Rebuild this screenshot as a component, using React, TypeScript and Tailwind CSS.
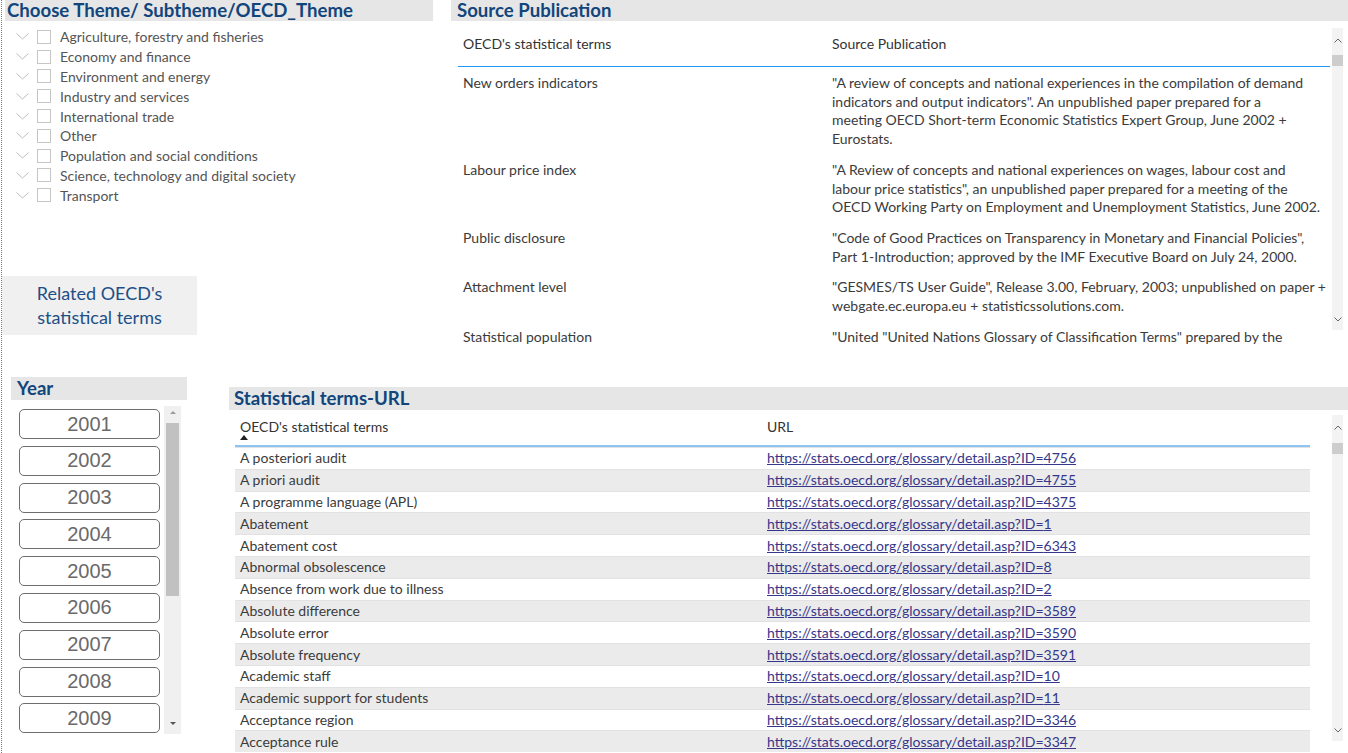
import React from 'react';

const themes = [
  'Agriculture, forestry and fisheries',
  'Economy and finance',
  'Environment and energy',
  'Industry and services',
  'International trade',
  'Other',
  'Population and social conditions',
  'Science, technology and digital society',
  'Transport',
];

const sources: { term: string; lines: string[] }[] = [
  {
    term: 'New orders indicators',
    lines: [
      '"A review of concepts and national experiences in the compilation of demand',
      'indicators and output indicators". An unpublished paper prepared for a',
      'meeting OECD Short-term Economic Statistics Expert Group, June 2002 +',
      'Eurostats.',
    ],
  },
  {
    term: 'Labour price index',
    lines: [
      '"A Review of concepts and national experiences on wages, labour cost and',
      'labour price statistics", an unpublished paper prepared for a meeting of the',
      'OECD Working Party on Employment and Unemployment Statistics, June 2002.',
    ],
  },
  {
    term: 'Public disclosure',
    lines: [
      '"Code of Good Practices on Transparency in Monetary and Financial Policies",',
      'Part 1-Introduction; approved by the IMF Executive Board on July 24, 2000.',
    ],
  },
  {
    term: 'Attachment level',
    lines: [
      '"GESMES/TS User Guide", Release 3.00, February, 2003; unpublished on paper +',
      'webgate.ec.europa.eu + statisticssolutions.com.',
    ],
  },
  {
    term: 'Statistical population',
    lines: ['"United "United Nations Glossary of Classification Terms" prepared by the'],
  },
];

const terms: [string, number][] = [
  ['A posteriori audit', 4756],
  ['A priori audit', 4755],
  ['A programme language (APL)', 4375],
  ['Abatement', 1],
  ['Abatement cost', 6343],
  ['Abnormal obsolescence', 8],
  ['Absence from work due to illness', 2],
  ['Absolute difference', 3589],
  ['Absolute error', 3590],
  ['Absolute frequency', 3591],
  ['Academic staff', 10],
  ['Academic support for students', 11],
  ['Acceptance region', 3346],
  ['Acceptance rule', 3347],
];

const years = [2001, 2002, 2003, 2004, 2005, 2006, 2007, 2008, 2009];

function Chevron({ up }: { up?: boolean }) {
  return (
    <svg width="8" height="5" viewBox="0 0 8 5" className="text-[#666]">
      <path d={up ? 'M0.5 4.5 L4 1 L7.5 4.5' : 'M0.5 0.5 L4 4 L7.5 0.5'} fill="none" stroke="currentColor" strokeWidth="1" />
    </svg>
  );
}

function ThinScroll({ thumbTop, height }: { thumbTop: number; height: number }) {
  return (
    <div className="relative w-[11px] shrink-0 bg-[#f3f3f3]" style={{ height }}>
      <div className="flex justify-center pt-[10px]"><Chevron up /></div>
      <div className="absolute left-0 right-0 h-[11px] bg-[#cdcdcd]" style={{ top: thumbTop }} />
      <div className="absolute bottom-[8px] left-0 right-0 flex justify-center"><Chevron /></div>
    </div>
  );
}

function PanelTitle({ children, className }: { children: React.ReactNode; className: string }) {
  return (
    <div className={`flex items-center bg-[#e6e6e6] font-['Lato'] text-[18.6px] font-bold text-[#11457b] ${className}`}>
      {children}
    </div>
  );
}

export default function App() {
  return (
    <div className="ml-px h-[753px] w-[1347px] overflow-hidden border-l border-dotted border-[#7a7a7a] bg-white font-['Lato',sans-serif] text-[14px] text-[#3b3b3b]">
      {/* top band */}
      <div className="flex h-[350px]">
        <div className="w-[431px] shrink-0">
          <PanelTitle className="ml-[3px] h-[21px] pl-[2px] leading-none">Choose Theme/ Subtheme/OECD_Theme</PanelTitle>
          <div className="mt-[6px]">
            {themes.map((t) => (
              <div key={t} className="flex h-[19.8px] items-center pl-[14px] text-[#555]">
                <svg width="13" height="7" viewBox="0 0 13 7" className="shrink-0">
                  <path d="M0.5 0.5 L6.5 6 L12.5 0.5" fill="none" stroke="#bdbdbd" strokeWidth="1" />
                </svg>
                <span className="ml-[8px] h-[14px] w-[14px] shrink-0 border border-[#c6c6c6] bg-white" />
                <span className="ml-[9px] whitespace-nowrap">{t}</span>
              </div>
            ))}
          </div>
          <div className="mt-[71px] flex h-[59px] w-[195px] flex-col items-center justify-center bg-[#f0f0f0] pb-[2px] text-[18px] leading-[24px] text-[#1d4f86]">
            <span>Related OECD's</span>
            <span>statistical terms</span>
          </div>
        </div>

        <div className="ml-[18px] flex flex-1 flex-col">
          <PanelTitle className="h-[21px] pl-[6px]">Source Publication</PanelTitle>
          <div className="mt-[7px] flex h-[320px] overflow-hidden">
            <div className="ml-[7px] w-[872px]">
              <div className="flex h-[39px] items-start border-b border-[#2196f3] pt-[8px] leading-[16px] text-[#333]">
                <div className="w-[369px] pl-[5px]">OECD's statistical terms</div>
                <div className="pl-[5px]">Source Publication</div>
              </div>
              <div className="mt-[1px]">
                {sources.map((s) => (
                  <div key={s.term} className="flex py-[6px] leading-[18.7px]">
                    <div className="w-[369px] shrink-0 pl-[5px]">{s.term}</div>
                    <div className="pl-[5px]">
                      {s.lines.map((l) => (
                        <div key={l} className="whitespace-nowrap">{l}</div>
                      ))}
                    </div>
                  </div>
                ))}
              </div>
            </div>
            <div className="ml-[2px]">
              <ThinScroll thumbTop={27} height={302} />
            </div>
          </div>
        </div>
      </div>

      {/* bottom band */}
      <div className="flex">
        <div className="ml-[9px] mt-[27px] w-[176px] shrink-0">
          <PanelTitle className="h-[23px] pl-[6px]">Year</PanelTitle>
          <div className="mt-[6px] flex">
            <div className="ml-[8px] flex w-[141px] flex-col gap-[6.8px] pt-[3px]">
              {years.map((y) => (
                <div key={y} className="flex h-[30px] items-center justify-center rounded-[5px] border border-[#6e6e6e] pb-px font-['Liberation_Sans',Arial,sans-serif] text-[20px] text-[#6a6a6a]">
                  {y}
                </div>
              ))}
            </div>
            <div className="relative ml-[4px] h-[328px] w-[17px] bg-[#f0f0f0]">
              <div className="absolute left-1/2 top-[5px] -translate-x-1/2 border-x-[3px] border-b-[3px] border-x-transparent border-b-[#9a9a9a]" />
              <div className="absolute left-[2px] right-[2px] top-[17px] h-[173px] bg-[#c1c1c1]" />
              <div className="absolute bottom-[9px] left-1/2 -translate-x-1/2 border-x-[3px] border-t-[3px] border-x-transparent border-t-[#555]" />
            </div>
          </div>
        </div>

        <div className="ml-[42px] mt-[37px] flex-1">
          <PanelTitle className="h-[23px] pl-[5px]">Statistical terms-URL</PanelTitle>
          <div className="mt-[5px] flex">
            <div className="ml-[6px] w-[1075px]">
              <div className="relative h-[32px] border-b-2 border-[#8cc4f3] text-[#333]">
                <div className="flex pt-[4px] leading-[16px]">
                  <div className="w-[527px] pl-[5px]">OECD's statistical terms</div>
                  <div className="pl-[5px]">URL</div>
                </div>
                <div className="absolute left-[5px] top-[20px] border-x-[4px] border-b-[5px] border-x-transparent border-b-[#222]" />
              </div>
              {terms.map(([t, id], i) => (
                <div
                  key={t}
                  className={`flex h-[21.8px] items-center border-t border-[#e2e2e2] pb-px ${i % 2 === 1 ? 'bg-[#ebebeb]' : 'bg-white'}`}
                >
                  <div className="w-[527px] whitespace-nowrap pl-[5px]">{t}</div>
                  <a className="whitespace-nowrap pl-[5px] text-[#36368a] underline">
                    https://stats.oecd.org/glossary/detail.asp?ID={id}
                  </a>
                </div>
              ))}
            </div>
            <div className="ml-[22px]">
              <ThinScroll thumbTop={28} height={326} />
            </div>
          </div>
        </div>
      </div>
    </div>
  );
}
